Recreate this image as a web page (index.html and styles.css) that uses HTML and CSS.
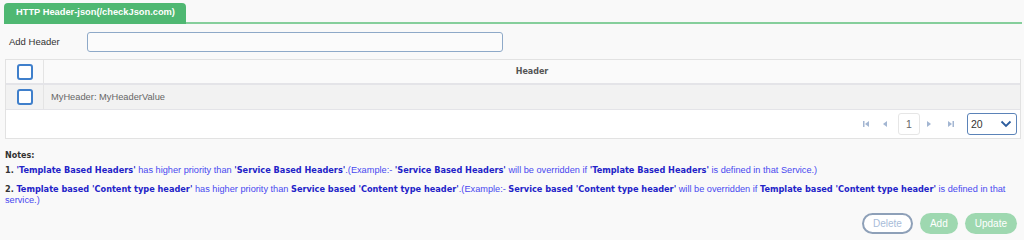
FILE: index.html
```html
<!DOCTYPE html>
<html lang="en">
<head>
    <meta charset="UTF-8">
    <title>HTTP Header</title>
    <link rel="stylesheet" href="styles.css">
</head>
<body>
    <div class="tabs">
        <div class="tab">HTTP Header-json(/checkJson.com)</div>
    </div>
    <div class="add-row">
        <label for="hdr">Add Header</label>
        <input id="hdr" type="text">
    </div>
    <div class="grid">
        <div class="grid-row head">
            <div class="cell chk"><span class="box"></span></div>
            <div class="cell title">Header</div>
        </div>
        <div class="grid-row item">
            <div class="cell chk"><span class="box"></span></div>
            <div class="cell text">MyHeader: MyHeaderValue</div>
        </div>
        <div class="pager">
            <svg class="pg first" width="10" height="10" viewBox="0 0 10 10"><rect x="2" y="2" width="1.5" height="6" fill="#a3b6d2"/><path d="M8 2 L4 5 L8 8 Z" fill="#a3b6d2"/></svg>
            <svg class="pg prev" width="10" height="10" viewBox="0 0 10 10"><path d="M7 2 L3 5 L7 8 Z" fill="#a3b6d2"/></svg>
            <span class="page">1</span>
            <svg class="pg next" width="10" height="10" viewBox="0 0 10 10"><path d="M3 2 L7 5 L3 8 Z" fill="#a3b6d2"/></svg>
            <svg class="pg last" width="10" height="10" viewBox="0 0 10 10"><path d="M2 2 L6 5 L2 8 Z" fill="#a3b6d2"/><rect x="6.5" y="2" width="1.5" height="6" fill="#a3b6d2"/></svg>
            <div class="size">
                <span>20</span>
                <svg width="12" height="8" viewBox="0 0 12 8"><path d="M1.5 1.5 L6 6 L10.5 1.5" fill="none" stroke="#2b5c9e" stroke-width="1.8"/></svg>
            </div>
        </div>
    </div>
    <div class="notes">
        <div class="notes-title">Notes:</div>
        <p><span class="num">1.</span> <b>'Template Based Headers'</b> has higher priority than <b>'Service Based Headers'</b>.(Example:- <b>'Service Based Headers'</b> will be overridden if <b>'Template Based Headers'</b> is defined in that Service.)</p>
        <p><span class="num">2.</span> <b>Template based 'Content type header'</b> has higher priority than <b>Service based 'Content type header'</b>.(Example:- <b>Service based 'Content type header'</b> will be overridden if <b>Template based 'Content type header'</b> is defined in that service.)</p>
    </div>
    <div class="actions">
        <button class="btn outline">Delete</button>
        <button class="btn green">Add</button>
        <button class="btn green">Update</button>
    </div>
</body>
</html>
```

FILE: styles.css
```css
body {
    margin: 0;
    padding: 3px 2px 0 4px;
    background-color: #f9f9f9;
    font-family: 'Liberation Sans', Arial, sans-serif;
    font-size: 9.3px;
    color: #444;
}
.tabs {
    border-bottom: 2px solid #86cf9c;
    height: 19px;
}
.tab {
    display: inline-block;
    background-color: #4fb872;
    color: white;
    font-weight: bold;
    font-size: 9.3px;
    height: 21px;
    line-height: 19px;
    padding: 0 11px 0 12px;
    border-radius: 4px 4px 0 0;
}
.add-row {
    display: flex;
    align-items: center;
    height: 35px;
    padding-left: 5px;
}
.add-row label {
    width: 78px;
    font-size: 9.5px;
    color: #333;
}
.add-row input {
    width: 410px;
    height: 18px;
    border: 1px solid #8ea9c8;
    border-radius: 3px;
    background: #fbfbfb;
    margin: 0;
    padding: 0 2px;
}
.grid {
    margin: 0 1px;
    border: 1px solid #e2e2e2;
    background: #fff;
}
.grid-row {
    display: flex;
}
.grid-row.head {
    height: 23px;
    background: #fafafa;
    border-bottom: 2px solid #e4e4e8;
}
.grid-row.item {
    height: 24px;
    background: #f2f2f2;
    border-bottom: 1px solid #e4e4e8;
}
.cell {
    display: flex;
    align-items: center;
}
.chk {
    width: 37px;
    justify-content: center;
    border-right: 1px solid #e4e4e4;
}
.box {
    width: 12px;
    height: 12px;
    border: 2px solid #3f7fcb;
    border-radius: 3px;
    background: #fff;
}
.title {
    flex: 1;
    justify-content: center;
    font-family: 'DejaVu Sans', Verdana, sans-serif;
    font-weight: bold;
    font-size: 8px;
    color: #555;
}
.text {
    flex: 1;
    padding-left: 7px;
    color: #666;
}
.pager {
    display: flex;
    justify-content: flex-end;
    align-items: center;
    height: 28px;
    padding-right: 3px;
}
.pg.prev {
    margin-left: 9px;
}
.page {
    box-sizing: border-box;
    width: 22px;
    height: 22px;
    border: 1px solid #e6e6e6;
    border-radius: 3px;
    background: #fff;
    display: flex;
    align-items: center;
    justify-content: center;
    font-size: 10.5px;
    color: #666;
    margin: 0 4px 0 8px;
}
.pg.last {
    margin-left: 12px;
}
.size {
    display: flex;
    align-items: center;
    justify-content: space-between;
    box-sizing: border-box;
    width: 50px;
    height: 22px;
    padding: 0 4px 0 3px;
    margin-left: 11px;
    border: 1px solid #5b83b8;
    border-radius: 3px;
    font-size: 10.5px;
    color: #333;
}
.notes {
    padding: 11px 0 0 1px;
    font-size: 9.2px;
    color: #4848f0;
}
.notes-title {
    font-family: 'DejaVu Sans', Verdana, sans-serif;
    font-weight: bold;
    font-size: 8px;
    line-height: 11px;
    color: #333;
    margin-bottom: 4px;
}
.notes p {
    margin: 0 0 8px 0;
    line-height: 11px;
}
.notes p:last-child {
    margin-bottom: 7px;
}
.notes b {
    font-family: 'DejaVu Sans', Verdana, sans-serif;
    font-size: 8.2px;
    color: #2323c8;
}
.num {
    font-family: 'DejaVu Sans', Verdana, sans-serif;
    font-weight: bold;
    font-size: 8.2px;
    color: #333;
}
.actions {
    display: flex;
    justify-content: flex-end;
    gap: 7px;
    padding-right: 5px;
}
.btn {
    height: 21px;
    border-radius: 11px;
    font-family: 'Liberation Sans', Arial, sans-serif;
    font-size: 10px;
    padding: 0 10px;
    cursor: pointer;
}
.btn.outline {
    width: 51px;
    padding: 0;
    background: #fff;
    border: 2px solid #8ea0b8;
    color: #a8bcd9;
}
.btn.green {
    background: #9ed8b0;
    border: none;
    color: #fff;
}
```
